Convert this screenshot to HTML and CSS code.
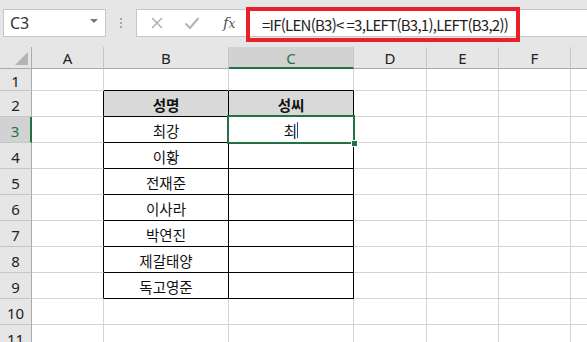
FILE: index.html
```html
<!DOCTYPE html>
<html lang="ko">
<head>
<meta charset="utf-8">
<link rel="stylesheet" href="styles.css">
</head>
<body>
<div class="app">
  <div class="toolbar">
    <div class="namebox">
      <span class="ref">C3</span>
      <span class="caret"></span>
    </div>
    <div class="grip"><i></i><i></i><i></i></div>
    <div class="fbar">
      <div class="fbtns">
        <svg class="ico" width="14" height="14" viewBox="0 0 14 14"><path d="M2 2 L12 12 M12 2 L2 12" stroke="#b3b3b3" stroke-width="1.6" fill="none"/></svg>
        <svg class="ico" width="16" height="14" viewBox="0 0 16 14"><path d="M1.5 7.5 L6 12 L14.5 2" stroke="#b3b3b3" stroke-width="2" fill="none"/></svg>
        <span class="fx">f<span class="fxx">x</span></span>
      </div>
      <div class="finput">
        <div class="mark">=IF(LEN(B3)<span class="lt">&lt;</span>=3,LEFT(B3,1),LEFT(B3,2))</div>
      </div>
    </div>
  </div>
  <div class="sheet">
    <div class="corner"><span class="tri"></span></div>
    <div class="ch">A</div><div class="ch">B</div><div class="ch sel">C</div><div class="ch">D</div><div class="ch">E</div><div class="ch">F</div><div class="ch last"></div>

    <div class="rh">1</div>
    <div class="c"></div><div class="c tt"></div><div class="c tt"></div><div class="c"></div><div class="c"></div><div class="c"></div><div class="c"></div>

    <div class="rh">2</div>
    <div class="c tl"></div><div class="c t th">성명</div><div class="c t th">성씨</div><div class="c"></div><div class="c"></div><div class="c"></div><div class="c"></div>

    <div class="rh sel">3</div>
    <div class="c tl"></div><div class="c t">최강</div><div class="c t cur">최<span class="cursor"></span><span class="selbox"><span class="handle"></span></span></div><div class="c"></div><div class="c"></div><div class="c"></div><div class="c"></div>

    <div class="rh">4</div>
    <div class="c tl"></div><div class="c t">이황</div><div class="c t"></div><div class="c"></div><div class="c"></div><div class="c"></div><div class="c"></div>

    <div class="rh">5</div>
    <div class="c tl"></div><div class="c t">전재준</div><div class="c t"></div><div class="c"></div><div class="c"></div><div class="c"></div><div class="c"></div>

    <div class="rh">6</div>
    <div class="c tl"></div><div class="c t">이사라</div><div class="c t"></div><div class="c"></div><div class="c"></div><div class="c"></div><div class="c"></div>

    <div class="rh">7</div>
    <div class="c tl"></div><div class="c t">박연진</div><div class="c t"></div><div class="c"></div><div class="c"></div><div class="c"></div><div class="c"></div>

    <div class="rh">8</div>
    <div class="c tl"></div><div class="c t">제갈태양</div><div class="c t"></div><div class="c"></div><div class="c"></div><div class="c"></div><div class="c"></div>

    <div class="rh">9</div>
    <div class="c tl"></div><div class="c t">독고영준</div><div class="c t"></div><div class="c"></div><div class="c"></div><div class="c"></div><div class="c"></div>

    <div class="rh">10</div>
    <div class="c"></div><div class="c"></div><div class="c"></div><div class="c"></div><div class="c"></div><div class="c"></div><div class="c"></div>

    <div class="rh">11</div>
    <div class="c"></div><div class="c"></div><div class="c"></div><div class="c"></div><div class="c"></div><div class="c"></div><div class="c"></div>
  </div>
</div>
</body>
</html>
```

FILE: styles.css
```css
* { box-sizing: border-box; }
html, body { margin: 0; padding: 0; }
body {
  width: 587px;
  height: 342px;
  overflow: hidden;
  background: #ffffff;
  font-family: "Noto Sans CJK KR", "Noto Sans", sans-serif;
}
.app { width: 587px; height: 342px; overflow: hidden; }

.toolbar {
  height: 47px;
  background: #e6e6e6;
  display: flex;
  align-items: flex-start;
  padding-top: 9px;
  padding-left: 3px;
}
.namebox {
  width: 103px;
  height: 28px;
  background: #fff;
  border: 1px solid #c6c6c6;
  display: flex;
  align-items: center;
  justify-content: space-between;
  padding: 0 7px 0 6px;
}
.ref {
  font-family: "Noto Sans", sans-serif;
  font-size: 16px;
  color: #333;
  line-height: 1;
}
.caret {
  width: 0; height: 0;
  border-left: 4px solid transparent;
  border-right: 4px solid transparent;
  border-top: 4px solid #777;
  margin-top: -4px;
}
.grip {
  width: 30px;
  height: 28px;
  display: flex;
  flex-direction: column;
  align-items: center;
  justify-content: center;
  gap: 2px;
}
.grip i {
  display: block;
  width: 2px; height: 2px;
  background: #a6a6a6;
}
.fbar {
  flex: 1;
  height: 28px;
  display: flex;
  background: #fff;
  border: 1px solid #c6c6c6;
  border-right: none;
}
.fbtns {
  width: 109px;
  display: flex;
  align-items: center;
  padding-left: 13px;
  gap: 20px;
}
.fx {
  font-family: "DejaVu Serif", serif;
  font-style: italic;
  font-size: 15px;
  color: #555;
  margin-left: 3px;
}
.fxx { font-size: 12px; }
.finput {
  flex: 1;
  position: relative;
}
.mark {
  position: absolute;
  left: 0;
  top: -3px;
  width: 274px;
  height: 35px;
  border: 4px solid #e8202a;
  display: flex;
  align-items: center;
  padding-left: 12px;
  font-family: "Noto Sans CJK KR", sans-serif;
  font-size: 15px;
  color: #222;
  white-space: nowrap;
  letter-spacing: -0.75px;
}
.lt { margin-right: 3px; }

.sheet {
  display: grid;
  grid-template-columns: 32px 72px 125px 125px 73px 72px 72px 30px;
  grid-template-rows: 22px 22px repeat(10, 26px);
}
.corner {
  background: #e6e6e6;
  border-right: 1px solid #ababab;
  border-bottom: 1px solid #ababab;
  position: relative;
}
.tri {
  position: absolute;
  right: 3px;
  bottom: 3px;
  width: 0; height: 0;
  border-left: 13px solid transparent;
  border-bottom: 13px solid #b4b4b4;
}
.ch {
  background: #e6e6e6;
  border-right: 1px solid #c6c6c6;
  border-bottom: 1px solid #ababab;
  display: flex;
  align-items: center;
  justify-content: center;
  font-family: "Noto Sans", sans-serif;
  font-size: 15px;
  color: #222;
  padding-top: 1px;
}
.ch.sel {
  background: #d2d2d2;
  color: #217346;
  border-bottom: 2px solid #217346;
}
.ch.last { border-right: none; }
.rh {
  background: #e6e6e6;
  border-right: 1px solid #ababab;
  border-bottom: 1px solid #c6c6c6;
  display: flex;
  align-items: center;
  justify-content: center;
  font-family: "Noto Sans", sans-serif;
  font-size: 15px;
  color: #222;
  padding-top: 2px;
}
.rh.sel {
  background: #d2d2d2;
  color: #217346;
  border-right: 2px solid #217346;
}
.c {
  border-right: 1px solid #d4d4d4;
  border-bottom: 1px solid #d4d4d4;
  display: flex;
  align-items: center;
  justify-content: center;
  font-size: 14.5px;
  color: #111;
  padding-top: 1px;
}
.c.tl { border-right-color: #000; }
.c.tt { border-bottom-color: #000; }
.c.t { border-right-color: #000; border-bottom-color: #000; }
.c.th { background: #d9d9d9; font-weight: bold; }
.c.cur { position: relative; }
.cursor {
  display: inline-block;
  width: 1px;
  height: 16px;
  background: #1f4fa0;
  margin-left: 0;
}
.selbox {
  position: absolute;
  left: -2px;
  top: -2px;
  right: -2px;
  bottom: -2px;
  border: 2px solid #217346;
}
.handle {
  position: absolute;
  right: -5px;
  bottom: -5px;
  width: 7px;
  height: 7px;
  background: #217346;
  border: 1px solid #fff;
}
```
